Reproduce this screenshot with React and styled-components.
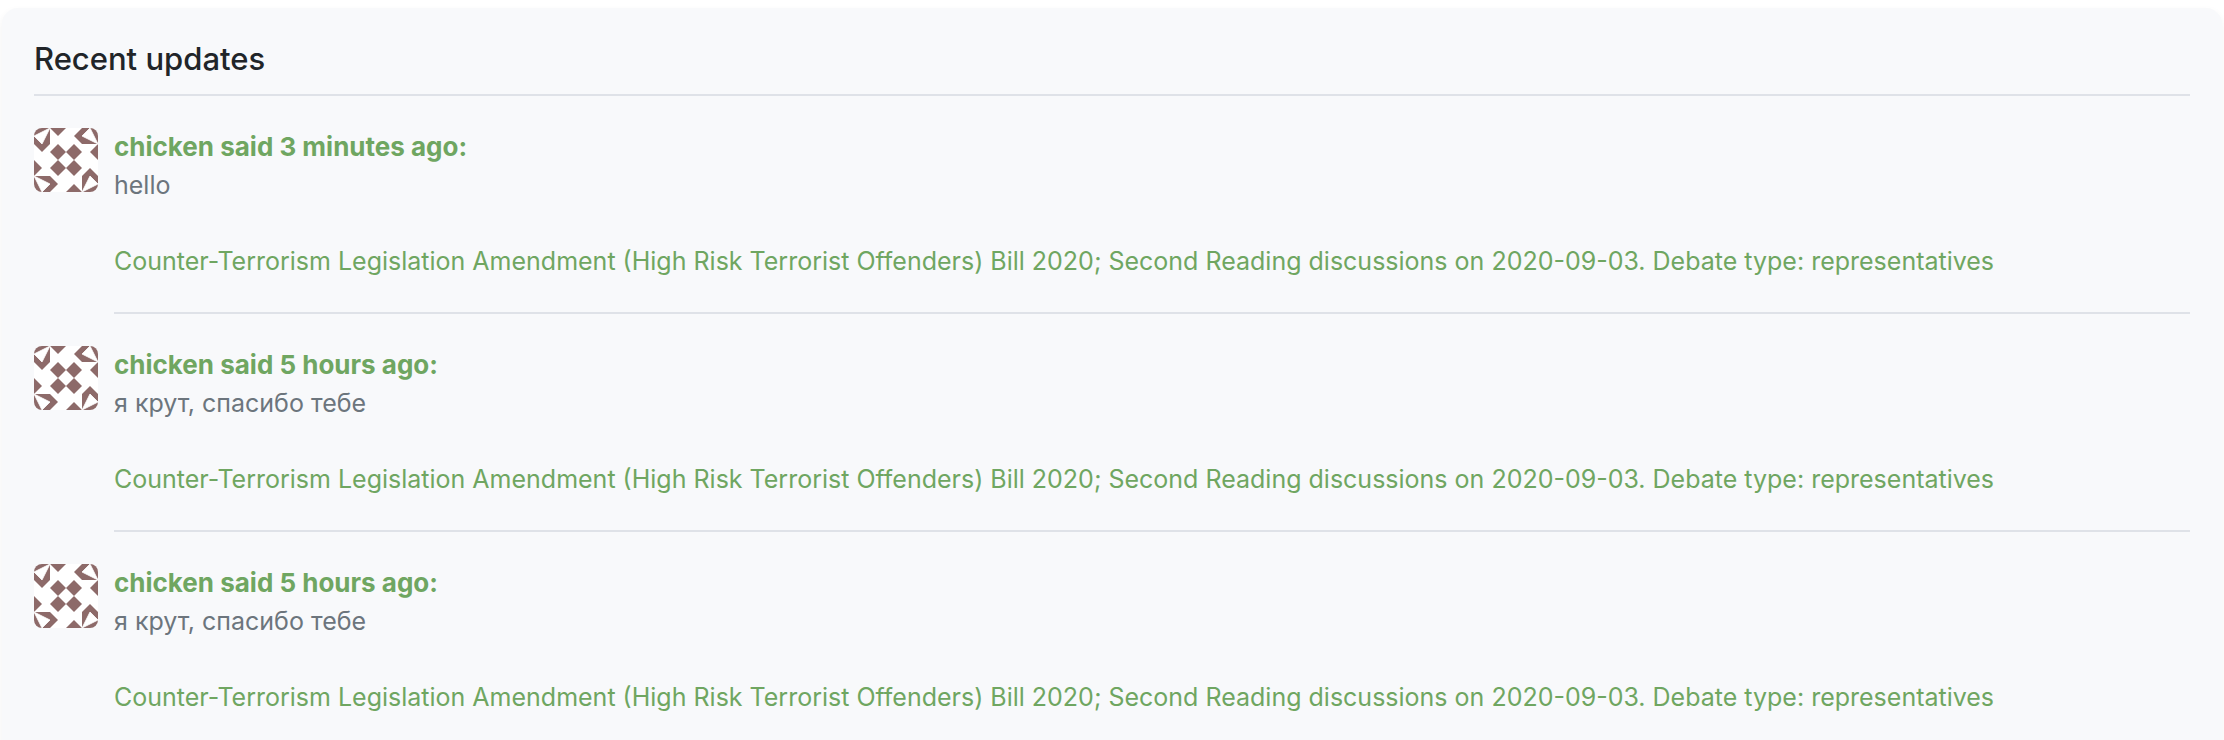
import React from 'react';
import styled, { createGlobalStyle } from 'styled-components';

const GlobalStyle = createGlobalStyle`
  *, *::before, *::after { box-sizing: border-box; }
  body {
    margin: 0;
    background: #fff;
    font-family: Inter, "Noto Sans", sans-serif;
  }
`;

const Page = styled.main`
  height: 100vh;
  overflow: hidden;
  padding: 8px 2px 0;
`;

const Card = styled.section`
  padding: 32px 32px 24px;
  border-radius: 16px;
  background: #f8f9fb;
  box-shadow: 0 4px 8px rgba(0, 0, 0, 0.06);
`;

const Title = styled.h1`
  margin: 0;
  padding-bottom: 16px;
  border-bottom: 2px solid #dfe2e8;
  color: #212529;
  font-size: 31px;
  font-weight: 500;
  line-height: 38px;
`;

const List = styled.ul`
  margin: 0;
  padding: 0;
  list-style: none;
`;

const Update = styled.li`
  display: flex;
  gap: 16px;
  padding-top: 32px;
`;

const AvatarImage = styled.svg`
  flex: none;
  width: 64px;
  height: 64px;
  border-radius: 8px;
`;

const Body = styled.div`
  flex: 1;
  min-width: 0;
  padding-bottom: 32px;
  border-bottom: 2px solid #dfe2e8;
  color: #6c757d;
  font-size: 25px;
  line-height: 38px;
`;

const Message = styled.p`
  margin: 0 0 38px;
`;

const TextLink = styled.a`
  display: block;
  color: #6fa661;
  text-decoration: none;
`;

const AuthorLink = styled(TextLink)`
  font-size: 26px;
  font-weight: 700;
`;

const BILL =
  'Counter-Terrorism Legislation Amendment (High Risk Terrorist Offenders) Bill 2020; Second Reading discussions on 2020-09-03. Debate type: representatives';

const updates = [
  { id: 1, author: 'chicken', when: '3 minutes ago', message: 'hello' },
  { id: 2, author: 'chicken', when: '5 hours ago', message: 'я крут, спасибо тебе' },
  { id: 3, author: 'chicken', when: '5 hours ago', message: 'я крут, спасибо тебе' },
];

// One quarter of the identicon, repeated at each right angle about the centre.
const QUARTER =
  'M0 0H16V16L8 24L0 16ZM16 0H32L24 8ZM24 16L32 24L24 32L16 24Z';

function Avatar() {
  return (
    <AvatarImage viewBox="0 0 64 64" role="img" aria-label="chicken">
      <rect width="64" height="64" fill="#fff" />
      {[0, 90, 180, 270].map((angle) => (
        <g key={angle} transform={`rotate(${angle} 32 32)`}>
          <path d={QUARTER} fill="#8d6a69" />
          <path d="M16 0L0 8L8 16Z" fill="#fff" stroke="#fff" strokeWidth="0.8" />
        </g>
      ))}
    </AvatarImage>
  );
}

export default function App() {
  return (
    <>
      <GlobalStyle />
      <Page>
        <Card>
          <Title>Recent updates</Title>
          <List>
            {updates.map((u) => (
              <Update key={u.id}>
                <Avatar />
                <Body>
                  <AuthorLink href="#">
                    {u.author} said {u.when}:
                  </AuthorLink>
                  <Message>{u.message}</Message>
                  <TextLink href="#">{BILL}</TextLink>
                </Body>
              </Update>
            ))}
          </List>
        </Card>
      </Page>
    </>
  );
}
